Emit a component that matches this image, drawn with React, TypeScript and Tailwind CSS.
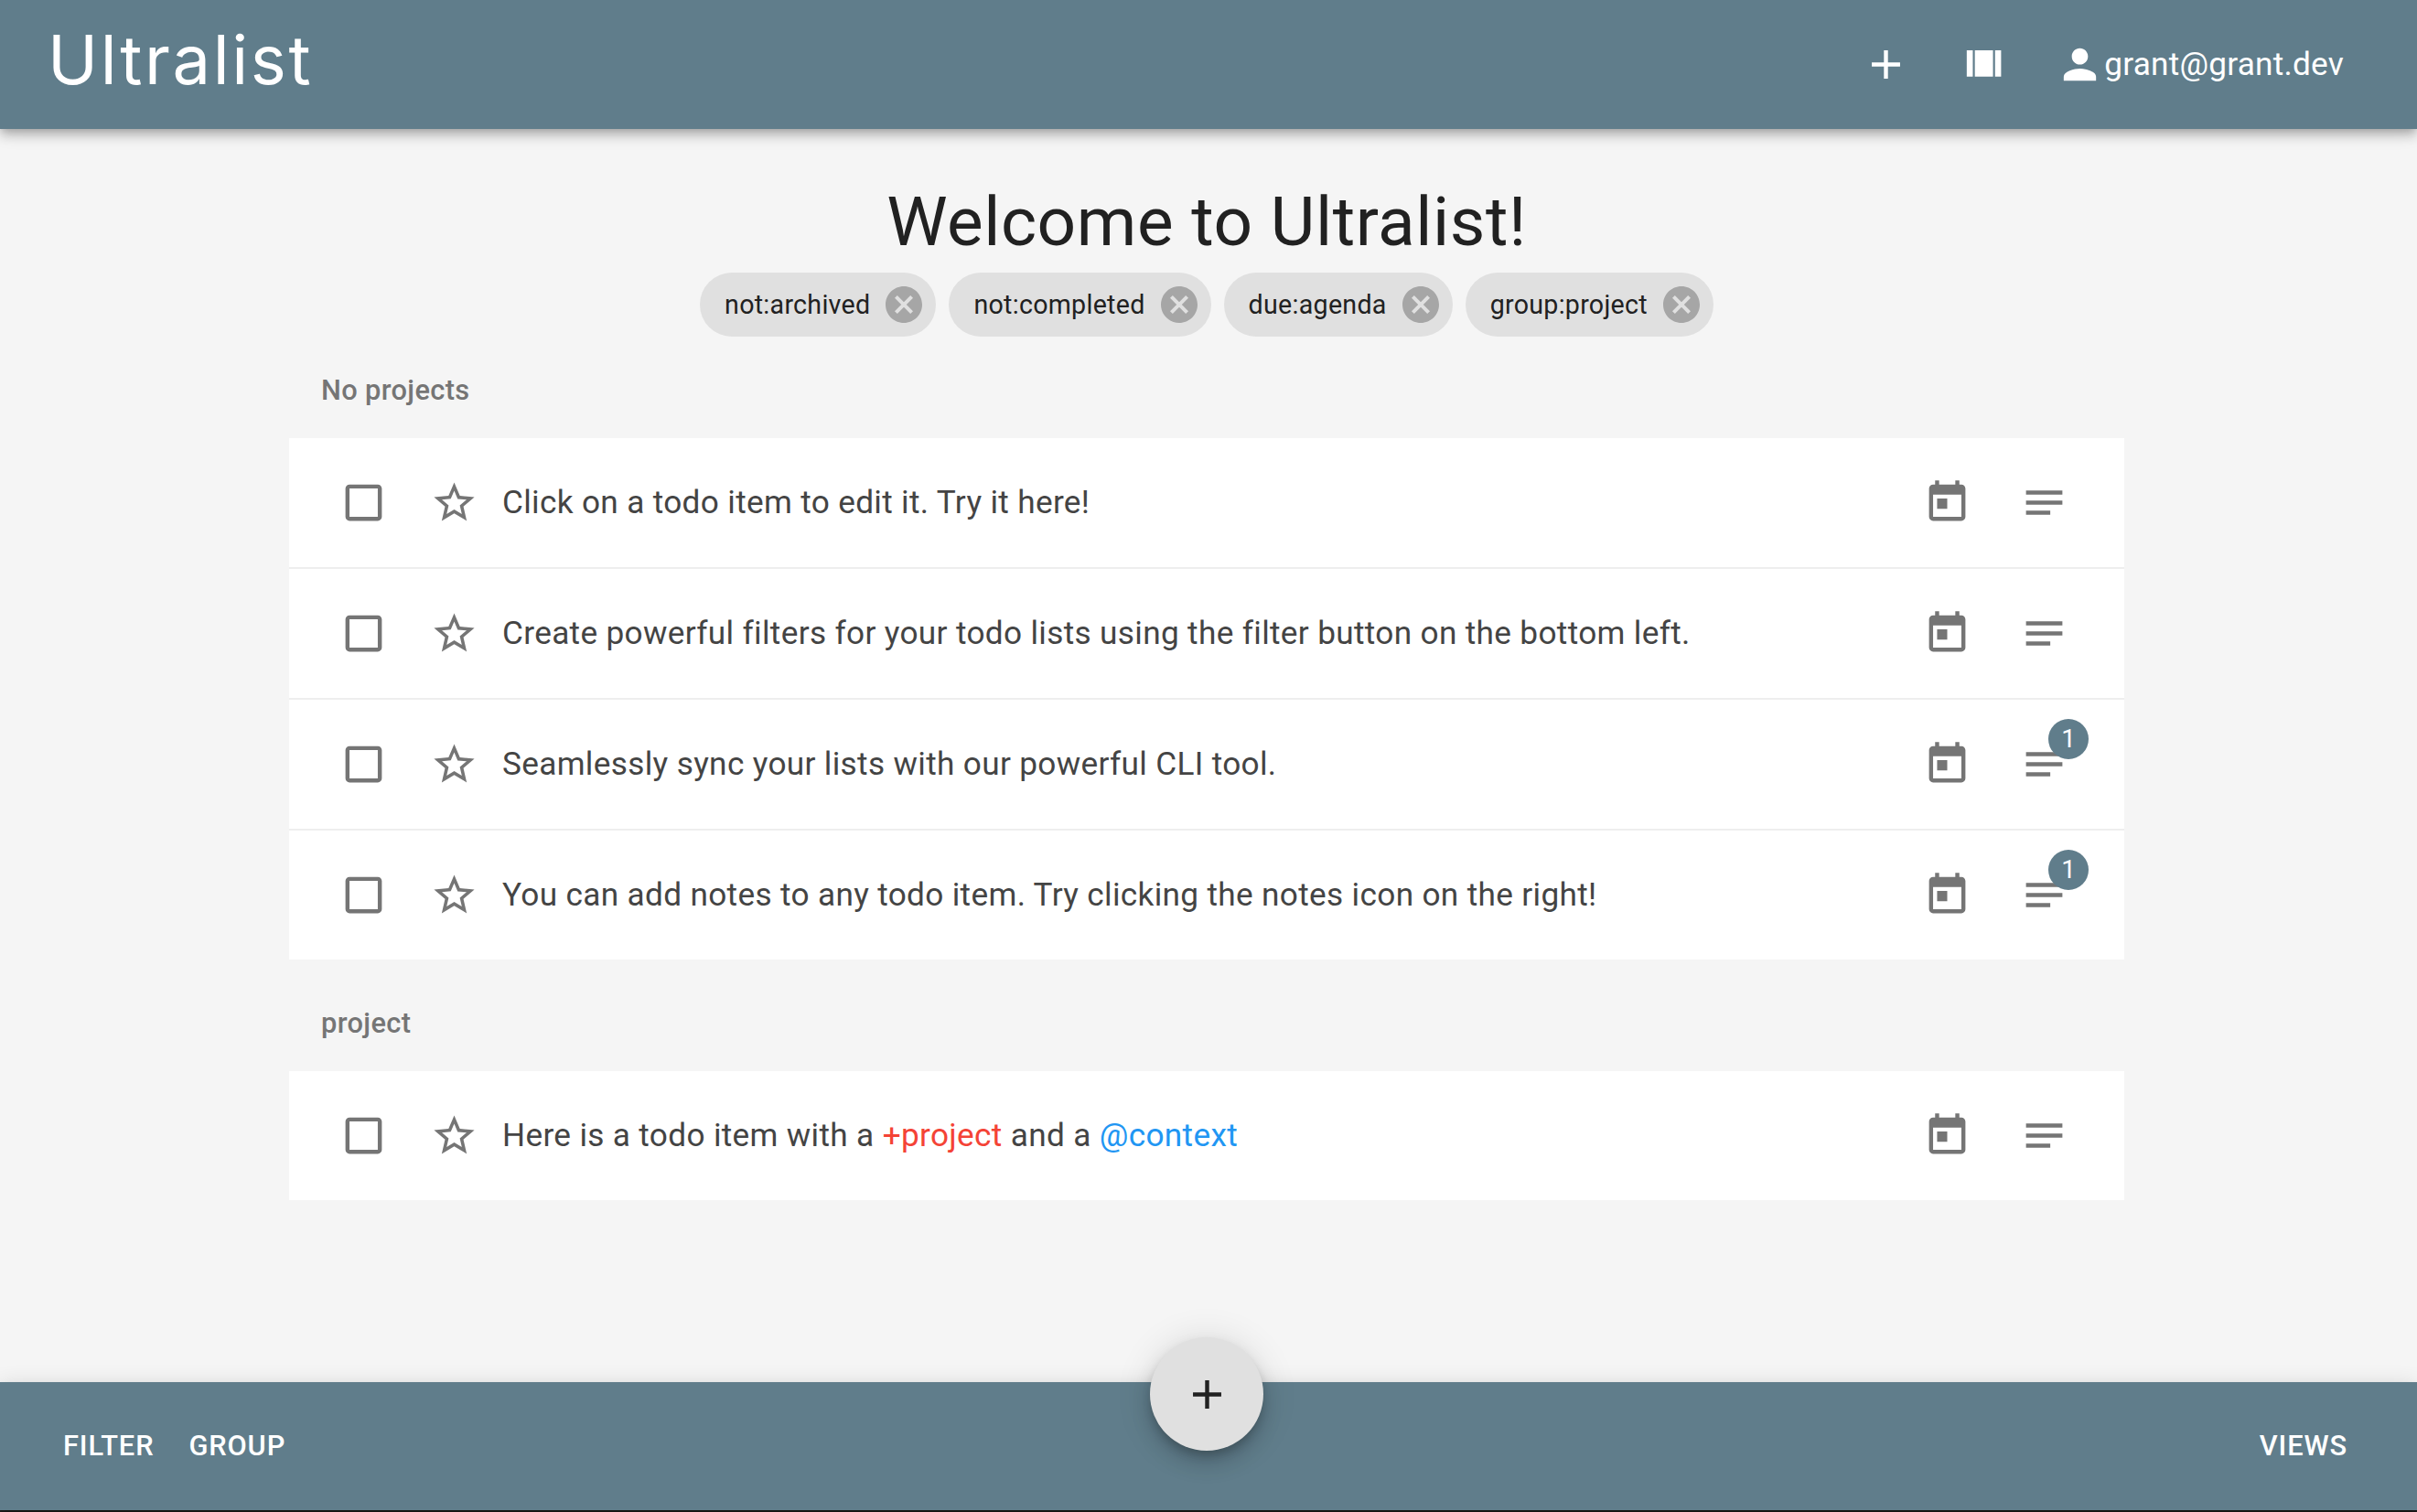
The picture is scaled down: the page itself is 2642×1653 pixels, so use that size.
const ICONS = {
  add: "M19 13h-6v6h-2v-6H5v-2h6V5h2v6h6v2z",
  viewArray: "M4 18h3V5H4v13zM18 5v13h3V5h-3zM8 18h9V5H8v13z",
  person:
    "M12 12c2.21 0 4-1.79 4-4s-1.79-4-4-4-4 1.79-4 4 1.79 4 4 4zm0 2c-2.67 0-8 1.34-8 4v2h16v-2c0-2.66-5.33-4-8-4z",
  checkbox:
    "M19 5v14H5V5h14m0-2H5c-1.1 0-2 .9-2 2v14c0 1.1.9 2 2 2h14c1.1 0 2-.9 2-2V5c0-1.1-.9-2-2-2z",
  star: "M22 9.24l-7.19-.62L12 2 9.19 8.63 2 9.24l5.46 4.73L5.82 21 12 17.27 18.18 21l-1.63-7.03L22 9.24zM12 15.4l-3.76 2.27 1-4.28-3.32-2.88 4.38-.38L12 6.1l1.71 4.04 4.38.38-3.32 2.88 1 4.28L12 15.4z",
  today:
    "M19 3h-1V1h-2v2H8V1H6v2H5c-1.11 0-1.99.9-1.99 2L3 19c0 1.1.89 2 2 2h14c1.1 0 2-.9 2-2V5c0-1.1-.9-2-2-2zm0 16H5V8h14v11zM7 10h5v5H7z",
  notes: "M3 18h12v-2H3v2zM3 6v2h18V6H3zm0 7h18v-2H3v2z",
  cancel:
    "M12 2C6.47 2 2 6.47 2 12s4.47 10 10 10 10-4.47 10-10S17.53 2 12 2zm5 13.59L15.59 17 12 13.41 8.41 17 7 15.59 10.59 12 7 8.41 8.41 7 12 10.59 15.59 7 17 8.41 13.41 12 17 15.59z",
};

const Icon = ({ d, className }: { d: string; className: string }) => (
  <svg viewBox="0 0 24 24" fill="currentColor" className={className}>
    <path d={d} />
  </svg>
);

const Chip = ({ label }: { label: string }) => (
  <div className="flex items-center h-[70px] pl-[27px] pr-[11px] gap-[13px] rounded-full bg-[#e0e0e0] text-[#212121] text-[28.6px] tracking-[0.28px]">
    <span>{label}</span>
    <Icon d={ICONS.cancel} className="w-[48px] h-[48px] text-[#a6a6a6]" />
  </div>
);

const TodoRow = ({
  children,
  noteCount,
}: {
  children: React.ReactNode;
  noteCount?: number;
}) => (
  <div className="flex items-center h-[141px] pl-[55px] pr-[61px] border-b-2 border-[#eeeeee] last:border-b-0 box-content">
    <Icon d={ICONS.checkbox} className="w-[53px] h-[53px] text-[#757575]" />
    <Icon d={ICONS.star} className="w-[53px] h-[53px] ml-[46px] text-[#757575]" />
    <div className="grow ml-[26px] text-[35.2px] tracking-[0.33px] text-[#444444]">
      {children}
    </div>
    <Icon d={ICONS.today} className="w-[53px] h-[53px] text-[#757575]" />
    <div className="relative ml-[53px]">
      <Icon d={ICONS.notes} className="w-[53px] h-[53px] text-[#757575]" />
      {noteCount && (
        <span className="absolute top-[-23px] right-[-22px] flex items-center justify-center w-[44px] h-[44px] rounded-full bg-[#607d8b] text-white text-[28px]">
          {noteCount}
        </span>
      )}
    </div>
  </div>
);

const SectionLabel = ({ children }: { children: React.ReactNode }) => (
  <div className="pl-[35px] text-[30.8px] font-medium tracking-[0.35px] leading-none text-[#757575]">
    {children}
  </div>
);

const FooterButton = ({ children }: { children: React.ReactNode }) => (
  <span className="pt-[1px] text-[30.8px] font-medium tracking-[0.88px] text-white">
    {children}
  </span>
);

export default function App() {
  return (
    <div className="relative flex flex-col h-screen pb-[2px] bg-[#1e1e1e] font-['Roboto',sans-serif]">
      <div className="flex flex-col grow bg-[#f5f5f5]">
        <header className="relative z-10 flex items-center h-[141px] pl-[52px] pr-[80px] bg-[#607d8b] text-white shadow-[0_4.4px_8.8px_-2.2px_rgba(0,0,0,0.2),0_8.8px_11px_0_rgba(0,0,0,0.14),0_2.2px_22px_0_rgba(0,0,0,0.12)]">
          <div className="grow pb-[11px] font-['Inter',sans-serif] text-[74px] font-normal tracking-[2.6px] leading-none">
            Ultralist
          </div>
          <Icon d={ICONS.add} className="w-[53px] h-[53px]" />
          <Icon d={ICONS.viewArray} className="w-[53px] h-[53px] ml-[53px]" />
          <Icon d={ICONS.person} className="w-[53px] h-[53px] ml-[53px]" />
          <span className="text-[35.2px] tracking-[0.23px]">grant@grant.dev</span>
        </header>

        <main className="flex flex-col grow items-center pt-[54px] pr-[4px]">
          <h1 className="text-[74.8px] tracking-[0.55px] leading-[96px] text-[#212121]">
            Welcome to Ultralist!
          </h1>
          <div className="flex gap-[14px] mt-[7px]">
            <Chip label="not:archived" />
            <Chip label="not:completed" />
            <Chip label="due:agenda" />
            <Chip label="group:project" />
          </div>

          <div className="w-[2006px] mt-[44px]">
            <SectionLabel>No projects</SectionLabel>
            <div className="mt-[36px] bg-white">
              <TodoRow>Click on a todo item to edit it. Try it here!</TodoRow>
              <TodoRow>
                Create powerful filters for your todo lists using the filter
                button on the bottom left.
              </TodoRow>
              <TodoRow noteCount={1}>
                Seamlessly sync your lists with our powerful CLI tool.
              </TodoRow>
              <TodoRow noteCount={1}>
                You can add notes to any todo item. Try clicking the notes icon
                on the right!
              </TodoRow>
            </div>

            <div className="mt-[55px]">
              <SectionLabel>project</SectionLabel>
            </div>
            <div className="mt-[36px] bg-white">
              <TodoRow>
                Here is a todo item with a{" "}
                <span className="text-[#f44336]">+project</span> and a{" "}
                <span className="text-[#2196f3]">@context</span>
              </TodoRow>
            </div>
          </div>
        </main>

        <footer className="relative z-10 flex items-center h-[140px] pl-[69px] pr-[76px] gap-[38px] bg-[#607d8b] shadow-[0_4.4px_8.8px_-2.2px_rgba(0,0,0,0.2),0_8.8px_11px_0_rgba(0,0,0,0.14),0_2.2px_22px_0_rgba(0,0,0,0.12)]">
          <FooterButton>FILTER</FooterButton>
          <FooterButton>GROUP</FooterButton>
          <span className="grow" />
          <FooterButton>VIEWS</FooterButton>
          <div className="absolute top-[-49px] left-[1257px] flex items-center justify-center w-[124px] h-[124px] rounded-full bg-[#e0e0e0] text-[#212121] shadow-[0_6.6px_11px_-2.2px_rgba(0,0,0,0.2),0_13.2px_22px_0_rgba(0,0,0,0.14),0_2.2px_40px_0_rgba(0,0,0,0.12)]">
            <Icon d={ICONS.add} className="w-[53px] h-[53px]" />
          </div>
        </footer>
      </div>
    </div>
  );
}
